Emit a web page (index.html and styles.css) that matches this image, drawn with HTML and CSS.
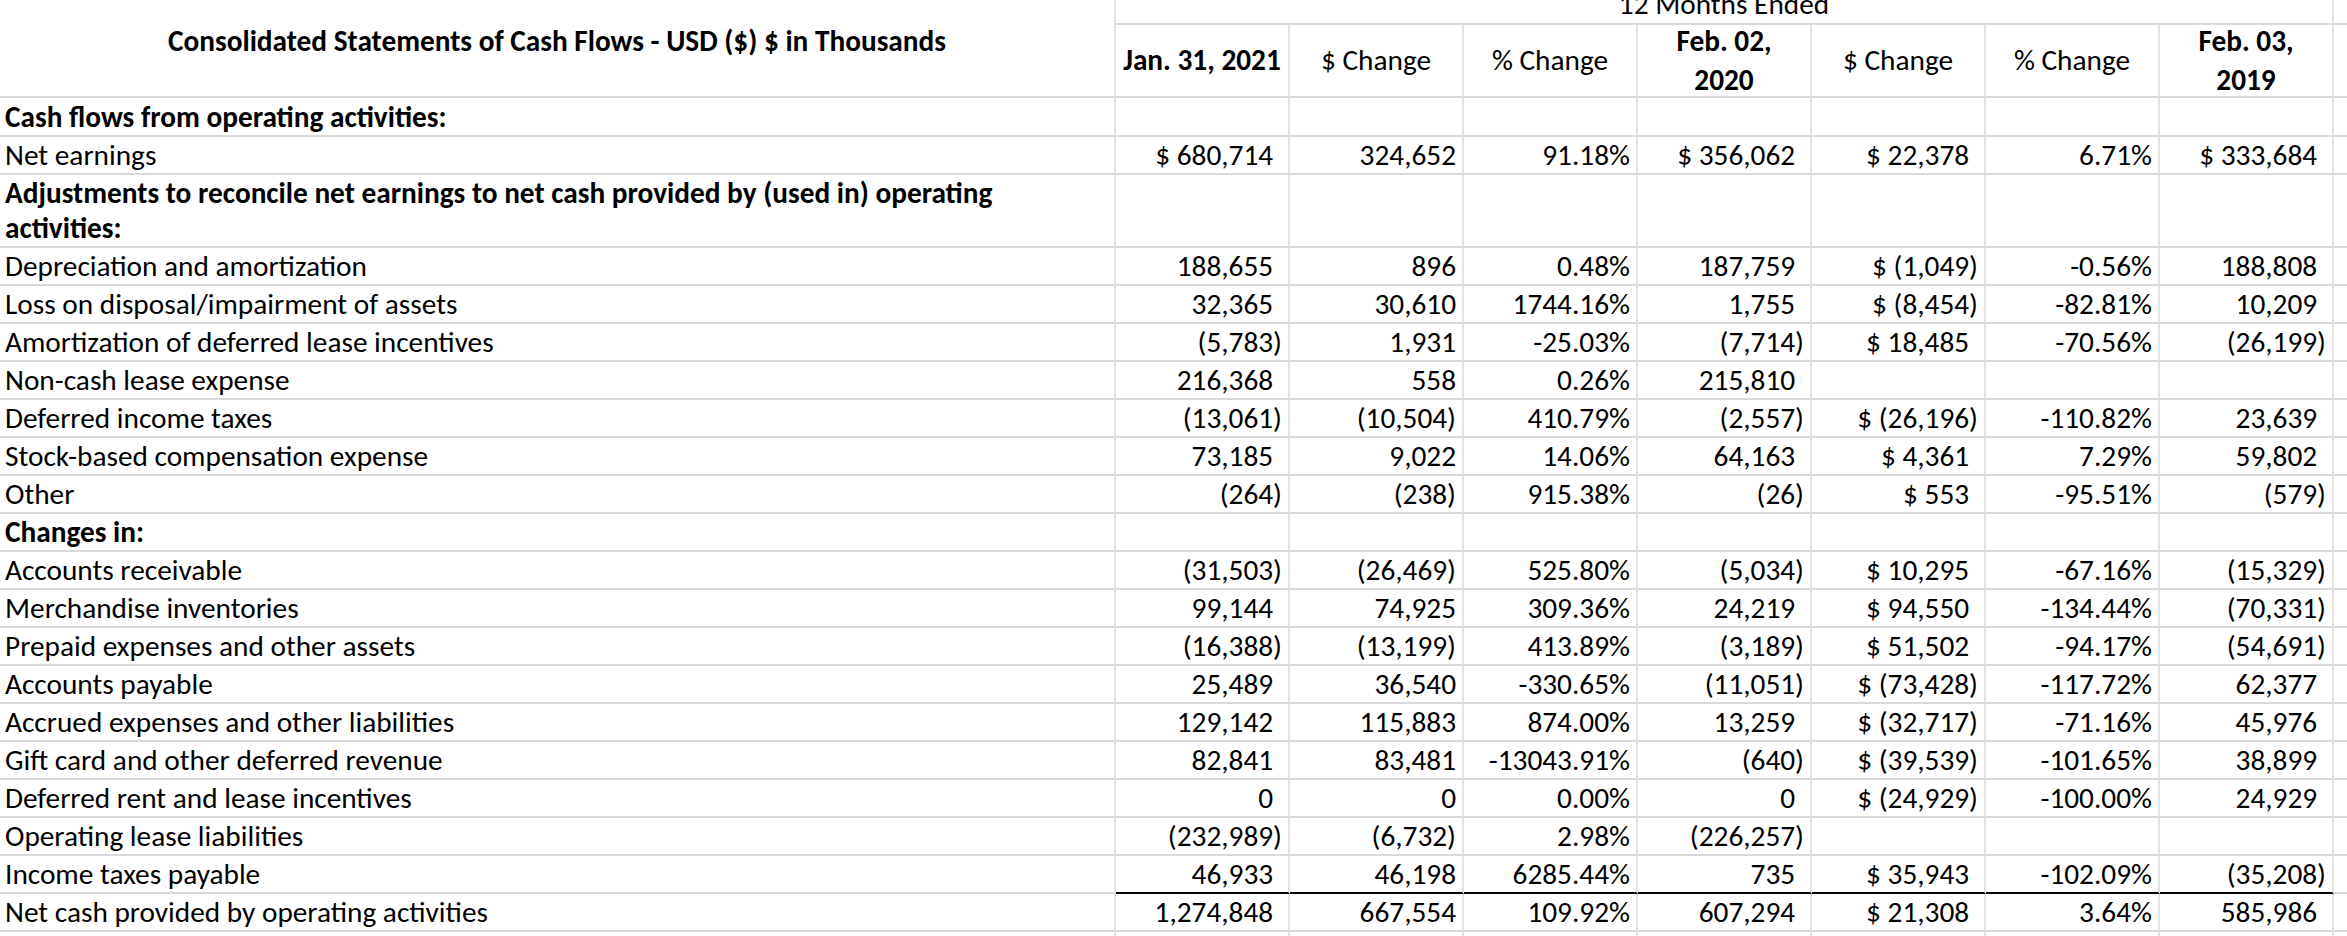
FILE: index.html
```html
<!DOCTYPE html>
<html lang="en">
<head>
<meta charset="utf-8">
<title>Consolidated Statements of Cash Flows</title>
<link rel="stylesheet" href="styles.css">
</head>
<body>
<div class="sheet">
  <div class="c title">Consolidated Statements of Cash Flows - USD ($) $ in Thousands</div>
  <div class="c months">12 Months Ended</div>
  <div class="c fill"></div>

  <div class="c hd b">Jan. 31, 2021</div>
  <div class="c hd">$ Change</div>
  <div class="c hd">% Change</div>
  <div class="c hd b">Feb. 02,<br>2020</div>
  <div class="c hd">$ Change</div>
  <div class="c hd">% Change</div>
  <div class="c hd b">Feb. 03,<br>2019</div>
  <div class="c fill"></div>

  <div class="c lbl b">Cash flows from operating activities:</div>
  <div class="c"></div><div class="c"></div><div class="c"></div><div class="c"></div><div class="c"></div><div class="c"></div><div class="c"></div>
  <div class="c fill"></div>

  <div class="c lbl">Net earnings</div>
  <div class="c n pp">$ 680,714</div>
  <div class="c n">324,652</div>
  <div class="c n">91.18%</div>
  <div class="c n pp">$ 356,062</div>
  <div class="c n pp">$ 22,378</div>
  <div class="c n">6.71%</div>
  <div class="c n pp">$ 333,684</div>
  <div class="c fill"></div>

  <div class="c lbl b wrap">Adjustments to reconcile net earnings to net cash provided by (used in) operating activities:</div>
  <div class="c"></div><div class="c"></div><div class="c"></div><div class="c"></div><div class="c"></div><div class="c"></div><div class="c"></div>
  <div class="c fill"></div>

  <div class="c lbl">Depreciation and amortization</div>
  <div class="c n pp">188,655</div>
  <div class="c n">896</div>
  <div class="c n">0.48%</div>
  <div class="c n pp">187,759</div>
  <div class="c n">$ (1,049)</div>
  <div class="c n">-0.56%</div>
  <div class="c n pp">188,808</div>
  <div class="c fill"></div>

  <div class="c lbl">Loss on disposal/impairment of assets</div>
  <div class="c n pp">32,365</div>
  <div class="c n">30,610</div>
  <div class="c n">1744.16%</div>
  <div class="c n pp">1,755</div>
  <div class="c n">$ (8,454)</div>
  <div class="c n">-82.81%</div>
  <div class="c n pp">10,209</div>
  <div class="c fill"></div>

  <div class="c lbl">Amortization of deferred lease incentives</div>
  <div class="c n">(5,783)</div>
  <div class="c n">1,931</div>
  <div class="c n">-25.03%</div>
  <div class="c n">(7,714)</div>
  <div class="c n pp">$ 18,485</div>
  <div class="c n">-70.56%</div>
  <div class="c n">(26,199)</div>
  <div class="c fill"></div>

  <div class="c lbl">Non-cash lease expense</div>
  <div class="c n pp">216,368</div>
  <div class="c n">558</div>
  <div class="c n">0.26%</div>
  <div class="c n pp">215,810</div>
  <div class="c"></div>
  <div class="c"></div>
  <div class="c"></div>
  <div class="c fill"></div>

  <div class="c lbl">Deferred income taxes</div>
  <div class="c n">(13,061)</div>
  <div class="c n">(10,504)</div>
  <div class="c n">410.79%</div>
  <div class="c n">(2,557)</div>
  <div class="c n">$ (26,196)</div>
  <div class="c n">-110.82%</div>
  <div class="c n pp">23,639</div>
  <div class="c fill"></div>

  <div class="c lbl">Stock-based compensation expense</div>
  <div class="c n pp">73,185</div>
  <div class="c n">9,022</div>
  <div class="c n">14.06%</div>
  <div class="c n pp">64,163</div>
  <div class="c n pp">$ 4,361</div>
  <div class="c n">7.29%</div>
  <div class="c n pp">59,802</div>
  <div class="c fill"></div>

  <div class="c lbl">Other</div>
  <div class="c n">(264)</div>
  <div class="c n">(238)</div>
  <div class="c n">915.38%</div>
  <div class="c n">(26)</div>
  <div class="c n pp">$ 553</div>
  <div class="c n">-95.51%</div>
  <div class="c n">(579)</div>
  <div class="c fill"></div>

  <div class="c lbl b">Changes in:</div>
  <div class="c"></div><div class="c"></div><div class="c"></div><div class="c"></div><div class="c"></div><div class="c"></div><div class="c"></div>
  <div class="c fill"></div>

  <div class="c lbl">Accounts receivable</div>
  <div class="c n">(31,503)</div>
  <div class="c n">(26,469)</div>
  <div class="c n">525.80%</div>
  <div class="c n">(5,034)</div>
  <div class="c n pp">$ 10,295</div>
  <div class="c n">-67.16%</div>
  <div class="c n">(15,329)</div>
  <div class="c fill"></div>

  <div class="c lbl">Merchandise inventories</div>
  <div class="c n pp">99,144</div>
  <div class="c n">74,925</div>
  <div class="c n">309.36%</div>
  <div class="c n pp">24,219</div>
  <div class="c n pp">$ 94,550</div>
  <div class="c n">-134.44%</div>
  <div class="c n">(70,331)</div>
  <div class="c fill"></div>

  <div class="c lbl">Prepaid expenses and other assets</div>
  <div class="c n">(16,388)</div>
  <div class="c n">(13,199)</div>
  <div class="c n">413.89%</div>
  <div class="c n">(3,189)</div>
  <div class="c n pp">$ 51,502</div>
  <div class="c n">-94.17%</div>
  <div class="c n">(54,691)</div>
  <div class="c fill"></div>

  <div class="c lbl">Accounts payable</div>
  <div class="c n pp">25,489</div>
  <div class="c n">36,540</div>
  <div class="c n">-330.65%</div>
  <div class="c n">(11,051)</div>
  <div class="c n">$ (73,428)</div>
  <div class="c n">-117.72%</div>
  <div class="c n pp">62,377</div>
  <div class="c fill"></div>

  <div class="c lbl">Accrued expenses and other liabilities</div>
  <div class="c n pp">129,142</div>
  <div class="c n">115,883</div>
  <div class="c n">874.00%</div>
  <div class="c n pp">13,259</div>
  <div class="c n">$ (32,717)</div>
  <div class="c n">-71.16%</div>
  <div class="c n pp">45,976</div>
  <div class="c fill"></div>

  <div class="c lbl">Gift card and other deferred revenue</div>
  <div class="c n pp">82,841</div>
  <div class="c n">83,481</div>
  <div class="c n">-13043.91%</div>
  <div class="c n">(640)</div>
  <div class="c n">$ (39,539)</div>
  <div class="c n">-101.65%</div>
  <div class="c n pp">38,899</div>
  <div class="c fill"></div>

  <div class="c lbl">Deferred rent and lease incentives</div>
  <div class="c n pp">0</div>
  <div class="c n">0</div>
  <div class="c n">0.00%</div>
  <div class="c n pp">0</div>
  <div class="c n">$ (24,929)</div>
  <div class="c n">-100.00%</div>
  <div class="c n pp">24,929</div>
  <div class="c fill"></div>

  <div class="c lbl">Operating lease liabilities</div>
  <div class="c n">(232,989)</div>
  <div class="c n">(6,732)</div>
  <div class="c n">2.98%</div>
  <div class="c n">(226,257)</div>
  <div class="c"></div>
  <div class="c"></div>
  <div class="c"></div>
  <div class="c fill"></div>

  <div class="c lbl">Income taxes payable</div>
  <div class="c n pp tot">46,933</div>
  <div class="c n tot">46,198</div>
  <div class="c n tot">6285.44%</div>
  <div class="c n pp tot">735</div>
  <div class="c n pp tot">$ 35,943</div>
  <div class="c n tot">-102.09%</div>
  <div class="c n tot">(35,208)</div>
  <div class="c fill"></div>

  <div class="c lbl">Net cash provided by operating activities</div>
  <div class="c n pp">1,274,848</div>
  <div class="c n">667,554</div>
  <div class="c n">109.92%</div>
  <div class="c n pp">607,294</div>
  <div class="c n pp">$ 21,308</div>
  <div class="c n">3.64%</div>
  <div class="c n pp">585,986</div>
  <div class="c fill"></div>

  <div class="c lbl"></div>
  <div class="c"></div><div class="c"></div><div class="c"></div><div class="c"></div><div class="c"></div><div class="c"></div><div class="c"></div>
  <div class="c fill"></div>
</div>
</body>
</html>
```
FILE: styles.css
```css
html, body {
  margin: 0;
  padding: 0;
  overflow: hidden;
  background: #fff;
}

.sheet {
  display: grid;
  grid-template-columns: 1116px repeat(7, 174px) 1fr;
  grid-template-rows: 39px 73px 39px 38px 73px repeat(19, 38px);
  margin-top: -14px;
  font-family: Calibri, Carlito, Lato, sans-serif;
  font-size: 29.3px;
  line-height: 35px;
  color: #000;
}

.c {
  box-sizing: border-box;
  display: flex;
  align-items: flex-end;
  min-width: 0;
  border-right: 2px solid #e3e3e3;
  border-bottom: 2px solid #d9d9d9;
  white-space: nowrap;
}

.b {
  font-weight: 700;
}

.title {
  grid-row: span 2;
  align-items: center;
  justify-content: center;
  font-weight: 700;
  text-align: center;
}

.months {
  grid-column: span 7;
  align-items: center;
  justify-content: center;
}

.hd {
  align-items: center;
  justify-content: center;
  text-align: center;
  line-height: 39px;
}

.lbl {
  justify-content: flex-start;
  padding-left: 5px;
}

.wrap {
  white-space: normal;
}

.n {
  justify-content: flex-end;
  padding-right: 6px;
}

.pp::after {
  content: ")";
  visibility: hidden;
}

.tot {
  border-bottom-color: #000;
}

.fill {
  border-right: none;
}
```
